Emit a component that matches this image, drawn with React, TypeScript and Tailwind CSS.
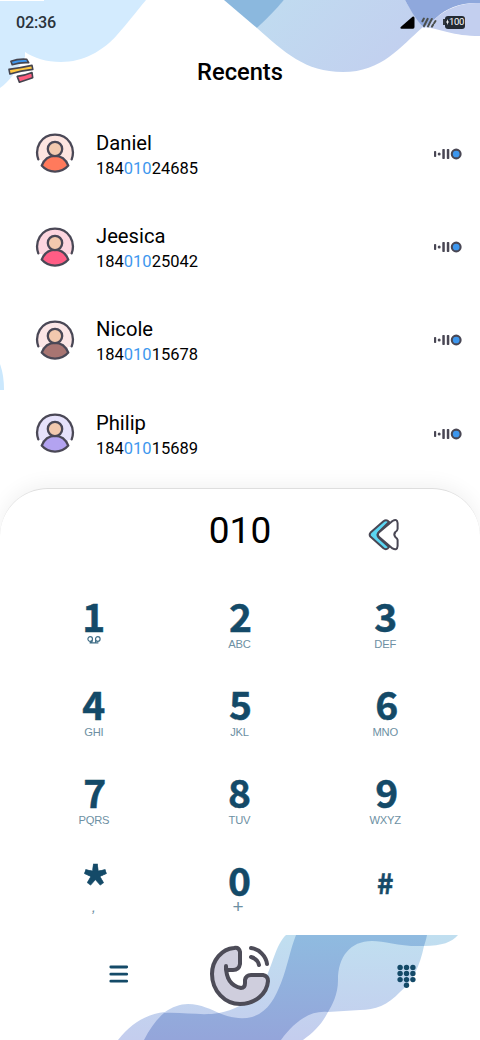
import React, { useState } from 'react';

interface Contact {
  name: string;
  number: string;
  body: string;
  halo: string;
}

const contacts: Contact[] = [
  { name: 'Daniel', number: '18401024685', body: '#ff7a5c', halo: '#fde5e0' },
  { name: 'Jeesica', number: '18401025042', body: '#ff5d85', halo: '#fdd6df' },
  { name: 'Nicole', number: '18401015678', body: '#a87572', halo: '#fbe6e6' },
  { name: 'Philip', number: '18401015689', body: '#b3a3f0', halo: '#e6e2fb' },
];

const keys = [
  { digit: '1', letters: '', shift: '' },
  { digit: '2', letters: 'ABC', shift: 'pl-[2px]' },
  { digit: '3', letters: 'DEF', shift: 'pl-[1px]' },
  { digit: '4', letters: 'GHI', shift: '' },
  { digit: '5', letters: 'JKL', shift: 'pl-[2px]' },
  { digit: '6', letters: 'MNO', shift: 'pl-[3px]' },
  { digit: '7', letters: 'PQRS', shift: 'pl-[2px]' },
  { digit: '8', letters: 'TUV', shift: '' },
  { digit: '9', letters: 'WXYZ', shift: 'pl-[3px]' },
  { digit: '*', letters: ',', shift: 'pl-[3px]' },
  { digit: '0', letters: '+', shift: '' },
  { digit: '#', letters: '', shift: '' },
];

const digitSize = (digit: string) => {
  if (digit === '#') return 'text-[28px] pt-[5px]';
  if (digit === '*') return 'text-[54px] pt-[11px]';
  return 'text-[39px]';
};

const Waves: React.FC = () => (
  <svg className="absolute inset-0" width="480" height="1040" viewBox="0 0 480 1040">
    <defs>
      <linearGradient id="topLight" x1="0" y1="0" x2="1" y2="0.4">
        <stop offset="0" stopColor="#c0dcf0" />
        <stop offset="1" stopColor="#c2d0ef" />
      </linearGradient>
      <linearGradient id="lowLight" x1="0" y1="0" x2="0" y2="1">
        <stop offset="0" stopColor="#c0dff0" />
        <stop offset="1" stopColor="#c4cdee" />
      </linearGradient>
      <linearGradient id="lowDark" x1="0" y1="0" x2="0" y2="1">
        <stop offset="0" stopColor="#8fbbe0" />
        <stop offset="1" stopColor="#94a5da" />
      </linearGradient>
    </defs>
    {/* Top */}
    <path d="M0 1H44V0H146C135 13 127 24 117 35C103 51 83 62 61 62C46 62 34 58 25 52V57C17 70 10 81 0 88Z" fill="#d3ebfe" />
    <path d="M284 0H405C410 8 416 19 423 27C400 47 382 72 343 72C305 72 284 52 257 28Z" fill="url(#topLight)" />
    <path d="M224 0H284C276 9 267 19 257 28Z" fill="#8bb8de" />
    <path d="M405 0H480V3C462 2 446 8 436 18L424 28C416 20 410 9 405 0Z" fill="#8fa8dc" />
    <path d="M480 3C462 2 446 9 436 18L424 27C442 29 452 36 480 36Z" fill="#c3cfef" />
    {/* Left edge */}
    <path d="M0 364C3 372 4 381 4 390H0Z" fill="#cbe8fd" />
    {/* Bottom */}
    <path
      d="M118 1040C132 1022 148 1014 165 1012C172 1007 180 1004 188 1004C201 1004 212 1010 219 1013C238 1009 254 1000 264 982C272 967 276 944 286 935H458C452 942 442 946 424 946C420 966 412 982 400 992C388 1005 375 1010 360 1010L328 1012C322 1024 314 1032 303 1040Z"
      fill="url(#lowLight)"
    />
    <path
      d="M144 1040C150 1028 157 1019 164 1013C184 1012 202 1016 219 1013C229 1017 240 1020 252 1017C268 1012 275 998 281 983C288 965 290 950 296 935H427C426 940 425 943 424 946C400 947 385 941 372 941C350 941 338 957 338 980C338 995 332 1005 328 1012C310 1010 294 1022 281 1040Z"
      fill="url(#lowDark)"
    />
  </svg>
);

const StatusBar: React.FC = () => (
  <div className="flex h-11 items-center justify-between pl-4 pr-[15px]">
    <span className="pt-[2px] text-[16.2px] font-medium tracking-[-0.2px] text-[#2a333b]">02:36</span>
    <div className="flex items-center">
      <svg width="15" height="13" viewBox="0 0 15 13">
        <path d="M14.5 2V11Q14.5 12.7 13 12.7H1.5Q-0.4 12.4 1 10.8L12.5 0.8Q14.3 -0.2 14.5 2Z" fill="#000" />
      </svg>
      <svg className="ml-[6px]" width="16" height="11" viewBox="0 0 16 11" stroke="#4b4f4c" strokeWidth="2" strokeLinecap="round">
        <path d="M1.4 4.3L2.9 1.6M3 9L6.7 1.8M7 9.4L10.8 2M11 9.6L12.2 7.5M13.2 6L14.5 4" />
      </svg>
      <div className="ml-[6px] flex items-center">
        <span className="h-[6px] w-[2px] bg-[#333940]" />
        <span className="flex h-[13px] w-[20px] items-center justify-center rounded-[3px] bg-[#232a33] text-[9.5px] leading-none tracking-[-0.4px] text-white">
          <svg className="shrink-0" width="3" height="6" viewBox="0 0 3 6" fill="#fff">
            <path d="M2 0L0 3.4H1.2L1 6L3 2.6H1.8Z" />
          </svg>
          100
        </span>
      </div>
    </div>
  </div>
);

const MenuLogo: React.FC = () => (
  <svg width="27" height="27" viewBox="0 0 27 27" stroke="#44444f" strokeWidth="1.6" strokeLinejoin="round">
    <path d="M2.9 4.3Q10 1.6 18.6 2.2L20.7 5.7Q12 5.2 4.2 7.8Z" fill="#3d97ee" />
    <path d="M1 12.4Q13 10.8 24 8.4L24.8 12.4Q13 13.4 1.9 17Z" fill="#ffc843" />
    <path d="M9.2 19.4Q17.5 18.4 24 15.6L24.7 20.7Q18 23 11.4 25.2Z" fill="#ff5d7d" />
  </svg>
);

const Avatar: React.FC<{ body: string; halo: string }> = ({ body, halo }) => (
  <svg className="mb-px" width="40" height="40" viewBox="0 0 40 40" stroke="#4a4856" strokeWidth="2.3" strokeLinecap="round" strokeLinejoin="round">
    <circle cx="20" cy="20" r="18" fill={halo} stroke="none" />
    <path d="M0 27H7L10 40H0ZM40 27H33L30 40H40Z" fill="#fff" stroke="none" />
    <path d="M3.3 26.4C-0.6 15.5 5.5 1.6 20 1.6S40.6 15.5 36.7 26.4" fill="none" />
    <path d="M6.7 32.6C12 19.6 28 19.6 33.3 32.6C26.5 40.6 13.5 40.6 6.7 32.6Z" fill={body} />
    <circle cx="20" cy="16" r="7.2" fill="#f2c9ae" />
  </svg>
);

const VoiceIcon: React.FC = () => (
  <svg width="29" height="12" viewBox="0 0 29 12" fill="#494754">
    <rect x="1" y="3" width="2.2" height="6" rx="0.8" />
    <circle cx="6.2" cy="6" r="1.5" />
    <rect x="9.3" y="1" width="2.5" height="10" rx="0.7" />
    <rect x="13.8" y="1" width="2.5" height="10" rx="0.7" />
    <circle cx="23.2" cy="6" r="4.4" fill="#3d97ee" stroke="#494754" strokeWidth="2.1" />
  </svg>
);

// The typed digits are highlighted inside every number
const MatchedNumber: React.FC<{ number: string; query: string }> = ({ number, query }) => {
  const at = number.indexOf(query);
  if (at < 0) return <>{number}</>;
  return (
    <>
      {number.slice(0, at)}
      <span className="text-[#3e97ee]">{query}</span>
      {number.slice(at + query.length)}
    </>
  );
};

const Voicemail: React.FC = () => (
  <svg width="14" height="8" viewBox="0 0 14 8" fill="none" stroke="#3f6d86" strokeWidth="1.2">
    <circle cx="3.2" cy="3" r="2.3" />
    <circle cx="10.8" cy="3" r="2.3" />
    <path d="M5.2 4.2Q5.4 6.6 2.6 6.9H11.4M8.6 4.2V6.6" />
  </svg>
);

const App: React.FC = () => {
  const [typed, setTyped] = useState('010');

  return (
    <div className="relative h-[1040px] w-[480px] overflow-hidden bg-white font-[Roboto,sans-serif] text-black">
      <Waves />

      <div className="relative flex h-full flex-col">
        <StatusBar />

        {/* Header */}
        <header className="grid h-[63px] grid-cols-[60px_1fr_60px] items-center pb-[5px]">
          <button className="pb-[5px] pl-2">
            <MenuLogo />
          </button>
          <h1 className="text-center text-[23.7px] font-medium">Recents</h1>
        </header>

        {/* Recent calls */}
        <ul className="h-[381px]">
          {contacts.map((contact) => (
            <li key={contact.name} className="flex h-[93.4px] items-center pl-[35px] pr-[18px]">
              <Avatar body={contact.body} halo={contact.halo} />
              <div className="ml-[21px] flex-1 pt-[3px]">
                <p className="text-[20.2px] leading-[26px]">{contact.name}</p>
                <p className="text-[16.5px] leading-[25px]">
                  <MatchedNumber number={contact.number} query={typed} />
                </p>
              </div>
              <VoiceIcon />
            </li>
          ))}
        </ul>

        {/* Dial pad */}
        <section className="h-[447px] rounded-t-[48px] border-t border-[#dedede] bg-white shadow-[0_-3px_20px_rgba(0,0,0,0.06)] [clip-path:inset(-30px_0_0_0)]">
          <div className="grid h-[93px] grid-cols-[1fr_120px_1fr] pt-px">
            <span />
            <p className="pt-[16px] text-center text-[37px] leading-[50px]">{typed}</p>
            <button className="self-start pl-[68px] pt-[28px]" onClick={() => setTyped(typed.slice(0, -1))}>
              <svg width="34" height="34" viewBox="0 0 34 34" stroke="#494754" strokeWidth="2" strokeLinejoin="round">
                <path d="M15.5 3.2Q18.5 0.9 21 4L10.5 14.5Q8.5 17 10.5 19.5L21 29Q18.5 32.6 15.5 30.3L2.6 18.8Q0.8 16.6 2.6 14.6Z" fill="#5bd6f3" />
                <path d="M24.5 3Q29.2 0.3 29.6 5V11Q29.4 12.6 27.4 14Q25.2 16.6 27.4 19.2Q29.4 20.5 29.6 22V28Q29.2 33 24.5 30.4L10.8 18.8Q8.8 16.6 10.8 14.4Z" fill="#fff" />
              </svg>
            </button>
          </div>
          <div className="grid grid-cols-3 pl-[21px] pr-[22px]">
            {keys.map((key) => (
              <button key={key.digit} className="flex h-[88px] flex-col items-center pt-[13px]" onClick={() => setTyped(typed + key.digit)}>
                <span
                  className={`flex h-[41px] items-center font-['Noto_Sans_CJK_SC',sans-serif] font-bold leading-none text-[#144a68] [-webkit-text-stroke:0.5px_#144a68] ${digitSize(key.digit)} ${key.shift}`}
                >
                  {key.digit}
                </span>
                {key.digit === '1' ? (
                  <Voicemail />
                ) : (
                  <span
                    className={`font-['Liberation_Sans',sans-serif] leading-[14px] tracking-[-0.2px] text-[#6d90a3] ${
                      key.digit === '0' ? 'pr-[3px] text-[19px]' : key.digit === '*' ? 'text-[15px] italic' : 'pt-px text-[11.2px]'
                    }`}
                  >
                    {key.letters}
                  </span>
                )}
              </button>
            ))}
          </div>
        </section>

        {/* Bottom bar */}
        <nav className="flex h-[105px] items-start pl-[109px]">
          <svg className="mt-[30px]" width="20" height="19" viewBox="0 0 20 19" stroke="#144a68" strokeWidth="2.8" strokeLinecap="round">
            <path d="M1.8 2H17.7M1.8 9.2H17.7M1.8 16.2H17.7" />
          </svg>
          <svg className="ml-[80px] mt-[10px]" width="62" height="62" viewBox="0 0 62 62" fill="none" stroke="#4d4c58" strokeWidth="4" strokeLinecap="round" strokeLinejoin="round">
            <path
              d="M25 3C13 4 3 15 3 29C3 46 16 59 31 59C46 59 58 49 59 36Q59 31 54 30H42Q37 30 36 35V38Q36 43 32 43C22 41 17 33 17 21V25H24Q30 25 31 19V7Q30 2 25 3Z"
              fill="#cfcedd"
            />
            <path d="M42 3C50 4 57 11 58 19M42 12C46 13 49 16 50 20" />
          </svg>
          <svg className="ml-[126px] mt-[29px]" width="20" height="24" viewBox="0 0 20 24" fill="#144a68">
            {[3.1, 9.5, 15.9].map((x) => [3.4, 9.5, 15.6].map((y) => <circle key={`${x}-${y}`} cx={x} cy={y} r="2.7" />))}
            <circle cx="9.5" cy="21.2" r="2.7" />
          </svg>
        </nav>
      </div>
    </div>
  );
};

export default App;
